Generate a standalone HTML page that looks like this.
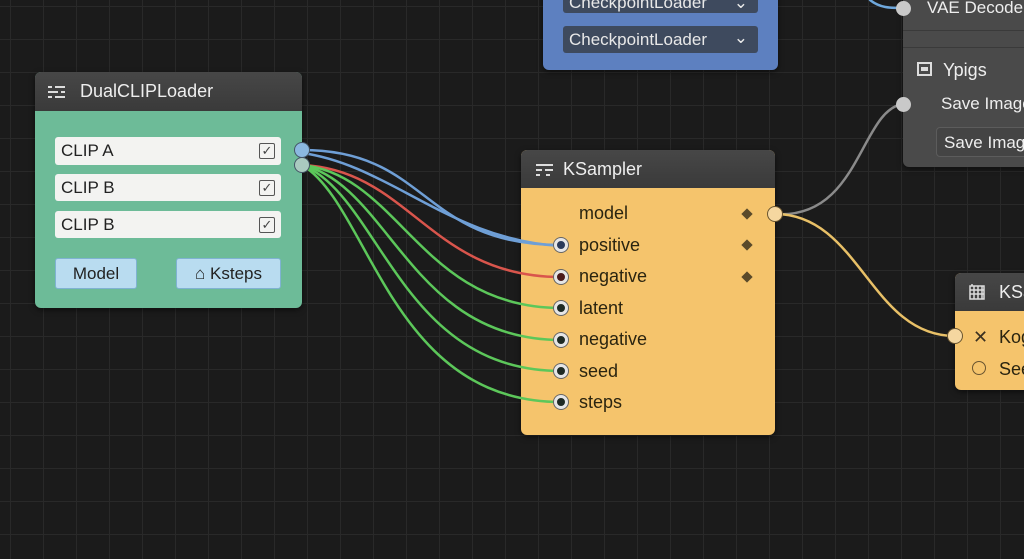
<!DOCTYPE html>
<html><head><meta charset="utf-8"><style>
*{box-sizing:border-box;margin:0;padding:0}
body{width:1024px;height:559px;overflow:hidden;background:#1b1b1b;font-family:"Liberation Sans",sans-serif;position:relative;
background-image:linear-gradient(#292929 1px,transparent 1px),linear-gradient(90deg,#292929 1px,transparent 1px);background-size:33px 33px;background-position:10px 6px}
.abs{position:absolute}
.node{position:absolute;border-radius:6px;overflow:hidden;box-shadow:0 2px 6px rgba(0,0,0,.5)}
.hdr{position:absolute;left:0;right:0;top:0;background:linear-gradient(#474747,#3a3a3a);color:#eee;font-size:18px;display:flex;align-items:center}
.inp{position:absolute;background:#f3f3f1;border-radius:3px;font-size:17px;color:#222;padding-left:6px;display:flex;align-items:center}
.chk{position:absolute;right:6px;top:6px;width:16px;height:16px;border:1.5px solid #555;border-radius:2px;font-size:13px;line-height:13px;text-align:center;color:#444}
.btn{position:absolute;background:#b9dcf0;border:1px solid #7fb2d2;border-radius:3px;font-size:17px;color:#222;display:flex;align-items:center;justify-content:center}
.row{position:absolute;font-size:18px;color:#2a2410}
.dia{position:absolute;width:8px;height:8px;background:#5a4a2a;transform:rotate(45deg)}
.sock{position:absolute;width:14px;height:14px;border-radius:50%;background:#1e2a24;border:3px solid #e6e6e6;box-shadow:0 0 0 1px #666}
.dd{position:absolute;background:#3e4a5e;border-radius:3px;color:#e8e8e8;font-size:17px;padding-left:6px;display:flex;align-items:center}
</style></head><body>

<!-- blue node -->
<div class="node" style="left:543px;top:-10px;width:235px;height:80px;background:#5d80c0">
<div class="dd" style="left:20px;top:2px;width:195px;height:21px">CheckpointLoader<span style="position:absolute;right:10px">⌄</span></div>
<div class="dd" style="left:20px;top:36px;width:195px;height:27px">CheckpointLoader<span style="position:absolute;right:10px;top:2px">⌄</span></div>
</div>

<!-- gray right node -->
<div class="node" style="left:903px;top:-6px;width:140px;height:173px;background:#4a4a4a">
<div class="abs" style="left:24px;top:4px;color:#eee;font-size:17px">VAE Decode</div>
<div class="abs" style="left:0;right:0;top:36px;height:1px;background:#3a3a3a"></div>
<div class="abs" style="left:0;right:0;top:53px;height:1px;background:#3a3a3a"></div>
<div class="abs" style="left:14px;top:68px;width:15px;height:14px;border:2px solid #ddd"><div style="position:absolute;left:2px;top:3px;width:7px;height:4px;background:#ddd"></div></div>
<div class="abs" style="left:40px;top:66px;color:#eee;font-size:18px">Ypigs</div>
<div class="abs" style="left:38px;top:100px;color:#eee;font-size:17px">Save Image</div>
<div class="abs" style="left:33px;top:133px;width:120px;height:30px;border:1px solid #5c5c5c;background:#444;border-radius:4px;color:#eee;font-size:17px;padding:5px 0 0 7px">Save Image</div>
</div>

<!-- DualCLIPLoader -->
<div class="node" style="left:35px;top:72px;width:267px;height:236px;background:#6dbb98">
<div class="hdr" style="height:39px;padding-left:45px">DualCLIPLoader</div>
<div class="inp" style="left:20px;top:65px;width:226px;height:28px">CLIP A<span class="chk">✓</span></div>
<div class="inp" style="left:20px;top:102px;width:226px;height:27px">CLIP B<span class="chk">✓</span></div>
<div class="inp" style="left:20px;top:139px;width:226px;height:27px">CLIP B<span class="chk">✓</span></div>
<div class="btn" style="left:20px;top:186px;width:82px;height:31px">Model</div>
<div class="btn" style="left:141px;top:186px;width:105px;height:31px">⌂ Ksteps</div>
</div>
<svg class="abs" style="left:48px;top:85px" width="18" height="14"><g stroke="#ddd" stroke-width="2"><path d="M0 2h4M7 2h10M0 7h10M13 7h4M0 12h4M7 12h10"/></g></svg>

<!-- KSampler -->
<div class="node" style="left:521px;top:150px;width:254px;height:285px;background:#f5c46c">
<div class="hdr" style="height:38px;padding-left:42px;color:#eee">KSampler</div>
<div class="row" style="left:58px;top:53px">model</div>
<div class="row" style="left:58px;top:85px">positive</div>
<div class="row" style="left:58px;top:116px">negative</div>
<div class="row" style="left:58px;top:148px">latent</div>
<div class="row" style="left:58px;top:179px">negative</div>
<div class="row" style="left:58px;top:211px">seed</div>
<div class="row" style="left:58px;top:242px">steps</div>
<div class="dia" style="left:222px;top:60px"></div>
<div class="dia" style="left:222px;top:91px"></div>
<div class="dia" style="left:222px;top:123px"></div>
</div>
<svg class="abs" style="left:536px;top:163px" width="17" height="14"><g stroke="#ddd" stroke-width="2"><path d="M0 2h17M0 7h6M9 7h8M0 12h4M10 12h4"/></g></svg>

<!-- KS right -->
<div class="node" style="left:955px;top:273px;width:90px;height:117px;background:#f5c46c">
<div class="hdr" style="height:38px;padding-left:44px">KSa</div>
<div class="row" style="left:18px;top:54px;color:#3a3020">✕</div>
<div class="row" style="left:44px;top:54px">Kog</div>
<div class="abs" style="left:17px;top:88px;width:14px;height:14px;border-radius:50%;border:1.5px solid #6a5530"></div>
<div class="row" style="left:44px;top:86px">See</div>
</div>
<svg class="abs" style="left:969px;top:283px" width="17" height="18"><g stroke="#ddd" stroke-width="1.5" fill="none"><rect x="1" y="3" width="14" height="13"/><path d="M1 7h14M1 11h14M5 3v13M9 3v13M13 3v13M3 1v2"/></g></svg>

<svg class="abs" style="left:0;top:0" width="1024" height="559">
<g fill="none" stroke-width="2.5" stroke-linecap="round">
<path d="M302 150 C430 150,420 245,561 245" stroke="#6f9fd6"/>
<path d="M302 153 C390 165,450 240,561 246" stroke="#6f9fd6"/>
<path d="M302 165 C410 170,430 277,561 277" stroke="#d9554c"/>
<path d="M302 165 C400 175,420 308,561 308" stroke="#5cc75a"/>
<path d="M302 165 C390 185,410 340,561 340" stroke="#5cc75a"/>
<path d="M302 165 C380 195,400 371,561 371" stroke="#5cc75a"/>
<path d="M302 165 C370 205,390 402,561 402" stroke="#5cc75a"/>
<path d="M775 214 C860 220,860 110,903 104" stroke="#8a8a8a"/>
<path d="M775 214 C860 214,870 336,955 336" stroke="#e8c067"/>
<path d="M870 0 C880 8,890 8,903 8" stroke="#6fa8dc"/>
</g></svg>

<div class="abs" style="left:896px;top:1px;width:15px;height:15px;border-radius:50%;background:#c9c9c9"></div>
<div class="abs" style="left:896px;top:97px;width:15px;height:15px;border-radius:50%;background:#c9c9c9"></div>
<div class="abs" style="left:294px;top:142px;width:16px;height:16px;border-radius:50%;background:#8bb8e0;border:1px solid #456"></div>
<div class="abs" style="left:294px;top:157px;width:16px;height:16px;border-radius:50%;background:#aacac0;border:1px solid #456"></div>
<div class="sock" style="left:554px;top:238px;background:#2a3a5a"></div>
<div class="sock" style="left:554px;top:270px;background:#4a1a1a"></div>
<div class="sock" style="left:554px;top:301px"></div>
<div class="sock" style="left:554px;top:333px"></div>
<div class="sock" style="left:554px;top:364px"></div>
<div class="sock" style="left:554px;top:395px"></div>
<div class="abs" style="left:767px;top:206px;width:16px;height:16px;border-radius:50%;background:#f5d7a0;border:1.5px solid #6a5530"></div>
<div class="abs" style="left:947px;top:328px;width:16px;height:16px;border-radius:50%;background:#f5d7a0;border:1.5px solid #6a5530"></div>
</body></html>
